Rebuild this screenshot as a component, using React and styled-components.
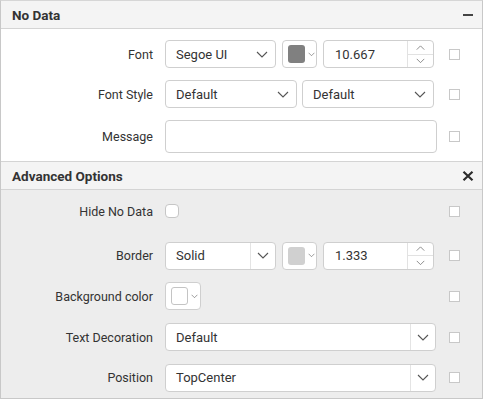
import React from "react";
import styled, { createGlobalStyle } from "styled-components";

const Global = createGlobalStyle`
  html, body { margin: 0; padding: 0; background: #fff; }
  body { font-family: Roboto, "Liberation Sans", sans-serif; color: #333; }
`;

const Panel = styled.div`
  width: 481px;
  height: 397px;
  border: 1px solid #c8c8c8;
  border-top-color: #d6d6d6;
  display: flex;
  flex-direction: column;
`;

const Header = styled.div`
  height: 27px;
  background: #f4f4f4;
  border-bottom: 1px solid #d4d4d4;
  border-top: ${(p) => (p.divided ? "1px solid #d4d4d4" : "0")};
  display: flex;
  align-items: center;
  justify-content: space-between;
  padding: 0 8px 0 11px;
  font-size: 13.5px;
  font-weight: 700;
  color: #333;
`;

const Body = styled.div`
  background: ${(p) => (p.shaded ? "#ededed" : "#fff")};
  padding: ${(p) => p.pad};
  display: flex;
  flex-direction: column;
  gap: ${(p) => p.gap}px;
  flex: ${(p) => (p.shaded ? 1 : "none")};
`;

const Row = styled.div`
  display: grid;
  grid-template-columns: 152px 272px 1fr;
  column-gap: 12px;
  align-items: center;
  height: ${(p) => p.h || 28}px;
  margin-bottom: ${(p) => p.mb || 0}px;
`;

const Label = styled.div`
  text-align: right;
  font-size: 12.5px;
  color: #333;
  white-space: nowrap;
`;

const Controls = styled.div`
  display: flex;
  gap: ${(p) => p.gap || 6}px;
  height: 100%;
  align-items: center;
`;

const Box = styled.div`
  box-sizing: border-box;
  height: ${(p) => p.h || 28}px;
  width: ${(p) => p.w}px;
  background: #fff;
  border: 1px solid #cfcfcf;
  border-radius: 4px;
  display: flex;
  align-items: stretch;
  font-size: 13px;
  color: #333;
`;

const Value = styled.div`
  flex: 1;
  display: flex;
  align-items: center;
  padding-left: ${(p) => p.pl || 10}px;
`;

const Drop = styled.div`
  width: ${(p) => p.w || 24}px;
  display: flex;
  align-items: center;
  justify-content: center;
  border-left: ${(p) => (p.split ? "1px solid #e4e4e4" : "0")};
`;

const Spinner = styled.div`
  width: 25px;
  border-left: 1px solid #e2e2e2;
  display: flex;
  flex-direction: column;
`;

const SpinHalf = styled.div`
  flex: 1;
  display: flex;
  align-items: center;
  justify-content: center;
  & + & { border-top: 1px solid #e2e2e2; }
`;

const Swatch = styled.div`
  width: 17px;
  height: 18px;
  border-radius: 3px;
  background: ${(p) => p.color};
  border: 1px solid ${(p) => (p.color === "#fff" ? "#c4c4c4" : "transparent")};
  box-sizing: border-box;
`;

const ColorBox = styled(Box)`
  align-items: center;
  padding-left: 5px;
  gap: 3px;
`;

const Toggle = styled.div`
  width: 14px;
  height: 14px;
  box-sizing: border-box;
  border: 1px solid #c6c6c6;
  border-radius: 4px;
  background: #fff;
`;

const Tick = styled.div`
  width: 11px;
  height: 11px;
  box-sizing: border-box;
  border: 1px solid #c8c8c8;
  background: #fff;
`;

const Chevron = ({ size = 12, color = "#555", up }) => (
  <svg width={size} height={size / 2 + 1} viewBox="0 0 12 7">
    <path
      d={up ? "M1 6 L6 1 L11 6" : "M1 1 L6 6 L11 1"}
      fill="none"
      stroke={color}
      strokeWidth="1.1"
    />
  </svg>
);

const Select = ({ w, value, split }) => (
  <Box w={w}>
    <Value>{value}</Value>
    <Drop w={split ? 24 : 26} split={split}>
      <Chevron />
    </Drop>
  </Box>
);

const ColorPick = ({ w, color }) => (
  <ColorBox w={w}>
    <Swatch color={color} />
    <Chevron size={7} color="#666" />
  </ColorBox>
);

const NumBox = ({ value }) => (
  <Box w={111}>
    <Value pl={11}>{value}</Value>
    <Spinner>
      <SpinHalf>
        <Chevron size={9} color="#777" up />
      </SpinHalf>
      <SpinHalf>
        <Chevron size={9} color="#777" />
      </SpinHalf>
    </Spinner>
  </Box>
);

const Minus = styled.div`
  width: 10px;
  height: 2px;
  background: #444;
  margin-right: 1px;
`;

export default function App() {
  return (
    <>
      <Global />
      <Panel>
        <Header>
          No Data
          <Minus />
        </Header>
        <Body pad="11px 0 8px" gap={12}>
          <Row>
            <Label>Font</Label>
            <Controls>
              <Select w={111} value="Segoe UI" />
              <ColorPick w={35} color="#808080" />
              <NumBox value="10.667" />
            </Controls>
            <Tick />
          </Row>
          <Row>
            <Label>Font Style</Label>
            <Controls gap={5}>
              <Select w={132} value="Default" />
              <Select w={132} value="Default" />
            </Controls>
            <Tick />
          </Row>
          <Row h={33}>
            <Label>Message</Label>
            <Box w={272} h={33} />
            <Tick />
          </Row>
        </Body>
        <Header divided>
          Advanced Options
          <svg width="12" height="10" viewBox="0 0 12 10">
            <path d="M1.5 0.8 L10.5 9.2 M10.5 0.8 L1.5 9.2" stroke="#2b2b2b" strokeWidth="2.2" />
          </svg>
        </Header>
        <Body shaded pad="7px 0 6px" gap={12.7}>
          <Row mb={4}>
            <Label>Hide No Data</Label>
            <Controls>
              <Toggle />
            </Controls>
            <Tick />
          </Row>
          <Row>
            <Label>Border</Label>
            <Controls>
              <Select w={111} value="Solid" split />
              <ColorPick w={35} color="#d0d0d0" />
              <NumBox value="1.333" />
            </Controls>
            <Tick />
          </Row>
          <Row>
            <Label>Background color</Label>
            <Controls>
              <ColorPick w={36} color="#fff" />
            </Controls>
            <Tick />
          </Row>
          <Row>
            <Label>Text Decoration</Label>
            <Controls>
              <Select w={271} value="Default" split />
            </Controls>
            <Tick />
          </Row>
          <Row>
            <Label>Position</Label>
            <Controls>
              <Select w={271} value="TopCenter" split />
            </Controls>
            <Tick />
          </Row>
        </Body>
      </Panel>
    </>
  );
}
